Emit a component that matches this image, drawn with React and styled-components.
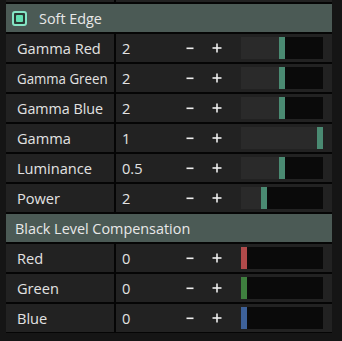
import React from "react";
import styled, { createGlobalStyle } from "styled-components";

const Global = createGlobalStyle`
  html, body { margin: 0; padding: 0; background: #151515; }
  body { font-family: "Open Sans", "Noto Sans", sans-serif; width: 342px; height: 341px; overflow: hidden; }
`;

const Panel = styled.div`
  width: 326px;
  margin-left: 6px;
  display: flex;
  flex-direction: column;
  gap: 2px;
  background: #050505;
  padding-bottom: 1px;
  overflow: hidden;
`;

const Header = styled.div`
  height: 28px;
  background: #4b5a55;
  display: flex;
  align-items: center;
  gap: 12px;
  padding-left: ${(p) => (p.$check ? 6 : 9)}px;
  color: #e8e8e8;
  font-size: 14.4px;
  white-space: nowrap;
`;

const Check = styled.div`
  width: 15px;
  height: 15px;
  box-sizing: border-box;
  border: 2px solid #86e6c6;
  border-radius: 3px;
  padding: 2px;
  background: #2a3a34;
  display: flex;
`;

const CheckFill = styled.div`
  flex: 1;
  background: #62e0b2;
  border-radius: 1px;
`;

const Row = styled.div`
  height: 28px;
  display: grid;
  grid-template-columns: 108px 1fr;
  gap: 2px;
  margin-top: ${(p) => (p.$peek ? "-26px" : "0")};
`;

const Label = styled.div`
  background: #222222;
  display: flex;
  align-items: center;
  padding-left: 11px;
  white-space: nowrap;
  overflow: hidden;
`;

const LabelText = styled.span`
  display: inline-block;
  color: #e2e2e2;
  font-size: 14.6px;
  transform: scaleX(${(p) => p.$squeeze || 1});
  transform-origin: left center;
`;

const ValueCell = styled.div`
  background: #222222;
  display: flex;
  align-items: center;
  padding-left: 6px;
  padding-right: 9px;
`;

const Value = styled.span`
  width: 54px;
  color: #e2e2e2;
  font-size: 14.6px;
`;

const Btn = styled.div`
  width: 27px;
  height: 28px;
  display: flex;
  align-items: center;
  justify-content: center;
`;

const Slider = styled.div`
  margin-left: 11px;
  width: 82px;
  height: 22px;
  background: #0a0a0a;
  position: relative;
`;

const Fill = styled.div`
  position: absolute;
  left: 0;
  top: 0;
  bottom: 0;
  background: #2a2a2a;
`;

const Handle = styled.div`
  position: absolute;
  top: 0;
  bottom: 0;
  width: 6px;
  background: ${(p) => p.$color};
`;

const Minus = () => (
  <svg width="8" height="10" viewBox="0 0 8 10">
    <rect x="0.5" y="4.5" width="7" height="1.6" fill="#eeeeee" />
  </svg>
);

const Plus = () => (
  <svg width="10" height="10" viewBox="0 0 10 10">
    <rect x="0.5" y="4.2" width="9" height="1.6" fill="#eeeeee" />
    <rect x="4.2" y="0.5" width="1.6" height="9" fill="#eeeeee" />
  </svg>
);

const PropRow = ({ label, value, pos, squeeze, color = "#4a8a72" }) => (
  <Row>
    <Label>
      <LabelText $squeeze={squeeze}>{label}</LabelText>
    </Label>
    <ValueCell>
      <Value>{value}</Value>
      <Btn>
        <Minus />
      </Btn>
      <Btn>
        <Plus />
      </Btn>
      <Slider>
        <Fill style={{ width: pos }} />
        <Handle $color={color} style={{ left: pos }} />
      </Slider>
    </ValueCell>
  </Row>
);

export default function App() {
  return (
    <>
      <Global />
      <Panel>
        <Row $peek>
          <Label />
          <ValueCell />
        </Row>
        <Header $check>
          <Check>
            <CheckFill />
          </Check>
          Soft Edge
        </Header>
        <PropRow label="Gamma Red" value="2" pos={38} />
        <PropRow label="Gamma Green" value="2" pos={38} squeeze={0.91} />
        <PropRow label="Gamma Blue" value="2" pos={38} squeeze={0.98} />
        <PropRow label="Gamma" value="1" pos={76} />
        <PropRow label="Luminance" value="0.5" pos={38} />
        <PropRow label="Power" value="2" pos={20} />
        <Header>Black Level Compensation</Header>
        <PropRow label="Red" value="0" pos={0} color="#b04a4a" />
        <PropRow label="Green" value="0" pos={0} color="#3e7f3e" />
        <PropRow label="Blue" value="0" pos={0} color="#3d6199" />
      </Panel>
    </>
  );
}
